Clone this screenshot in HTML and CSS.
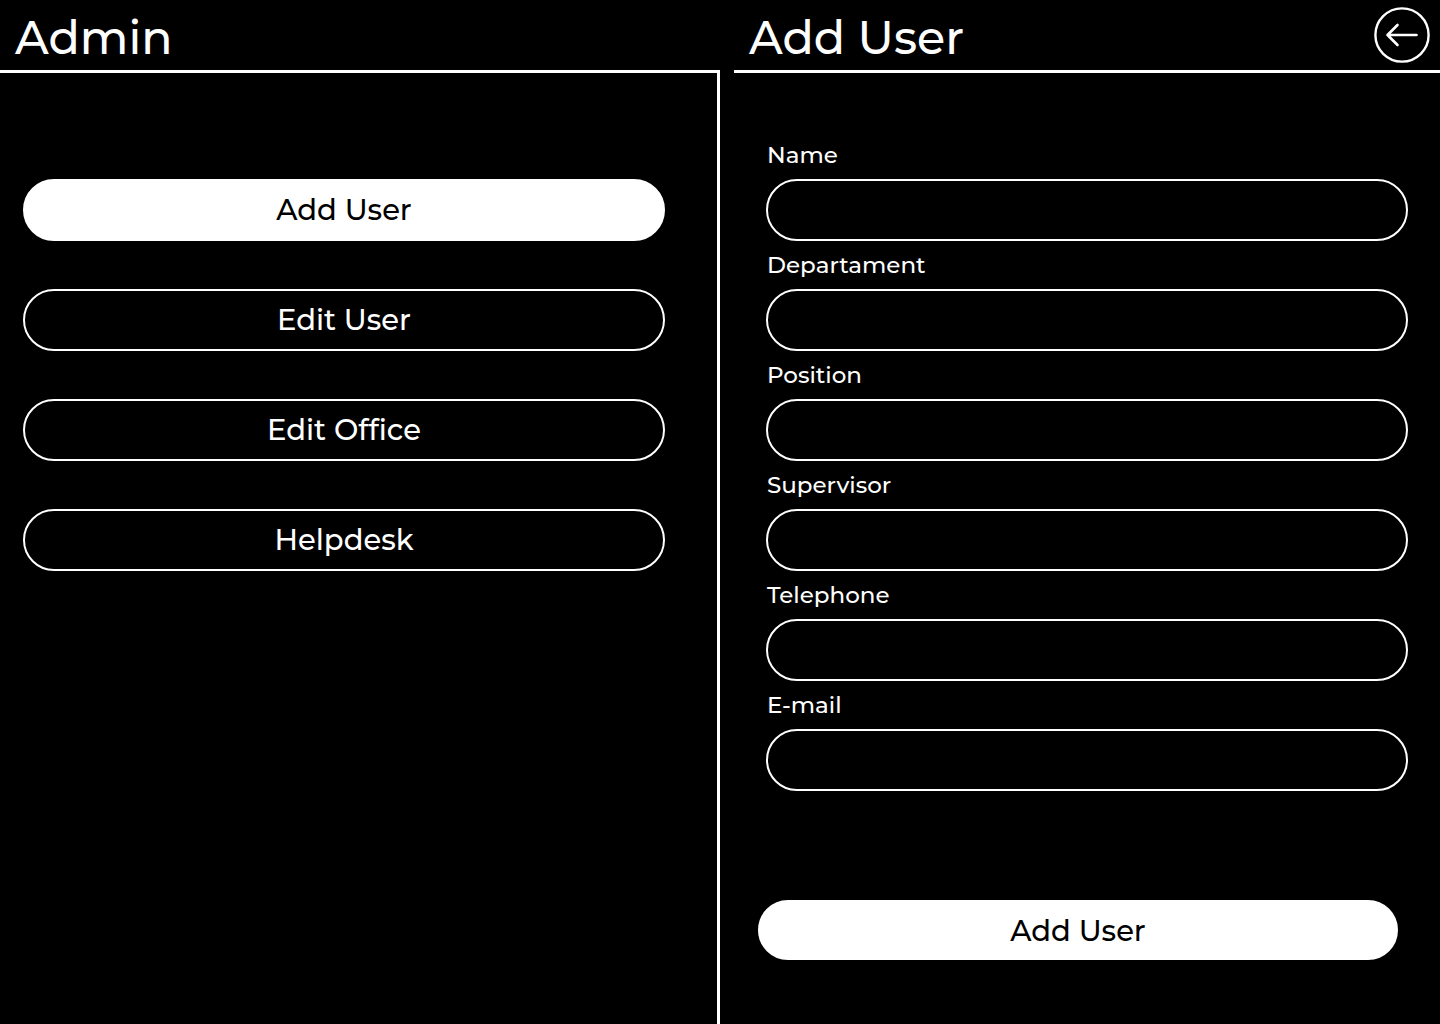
FILE: index.html
```html
<!DOCTYPE html>
<html lang="en">
<head>
<meta charset="utf-8">
<meta name="viewport" content="width=device-width, initial-scale=1">
<title>Admin – Add User</title>
<link rel="stylesheet" href="styles.css">
</head>
<body>
<div class="layout">
  <section class="panel">
    <header class="panel-header">
      <h1 class="title">Admin</h1>
    </header>
    <nav class="menu">
      <button type="button" class="pill pill-active">Add User</button>
      <button type="button" class="pill">Edit User</button>
      <button type="button" class="pill">Edit Office</button>
      <button type="button" class="pill">Helpdesk</button>
    </nav>
  </section>
  <main class="panel panel-detail">
    <header class="panel-header">
      <h2 class="title">Add User</h2>
      <button type="button" class="back" aria-label="Back">
        <svg class="back-icon" viewBox="0 0 56 56" fill="none" stroke="currentColor" stroke-linecap="round" stroke-linejoin="round">
          <circle cx="28" cy="28" r="26.600" stroke-width="2.400"/>
          <path d="M42.500 28H13.500M23.500 18L13.500 28L23.500 38" stroke-width="2.600"/>
        </svg>
      </button>
    </header>
    <form>
      <div class="fields">
        <label class="label" for="name">Name</label>
        <input class="input" id="name" type="text">
        <label class="label" for="department">Departament</label>
        <input class="input" id="department" type="text">
        <label class="label" for="position">Position</label>
        <input class="input" id="position" type="text">
        <label class="label" for="supervisor">Supervisor</label>
        <input class="input" id="supervisor" type="text">
        <label class="label" for="telephone">Telephone</label>
        <input class="input" id="telephone" type="tel">
        <label class="label" for="email">E-mail</label>
        <input class="input" id="email" type="email">
      </div>
      <div class="actions">
        <button type="submit" class="pill pill-active pill-submit">Add User</button>
      </div>
    </form>
  </main>
</div>
</body>
</html>
```
FILE: styles.css
```css
* {
  box-sizing: border-box;
}

body {
  margin: 0;
  background: #000;
  color: #fff;
  font-family: Montserrat, Inter, sans-serif;
  font-weight: 500;
}

.layout {
  display: grid;
  grid-template-columns: 1fr 1fr;
  min-height: 100vh;
}

.panel {
  display: flex;
  flex-direction: column;
}

.panel-detail {
  padding-left: 14px;
}

.panel-header {
  display: flex;
  align-items: center;
  justify-content: space-between;
  height: 73px;
  padding: 0 10px 0 15px;
  border-bottom: 3px solid #fff;
}

.title {
  margin: 0;
  padding-top: 6px;
  font-size: 46px;
  font-weight: 500;
  line-height: 64px;
}

.back {
  width: 56px;
  height: 56px;
  padding: 0;
  border: 0;
  border-radius: 50%;
  background: none;
  color: inherit;
  cursor: pointer;
}

.back-icon {
  display: block;
  width: 100%;
  height: 100%;
}

.menu {
  display: flex;
  flex: 1;
  flex-direction: column;
  gap: 48px;
  padding: 106px 52px 48px 23px;
  border-right: 3px solid #fff;
}

.pill {
  width: 100%;
  height: 62px;
  padding: 0 0 2px;
  border: 2px solid #fff;
  border-radius: 31px;
  background: #000;
  color: #fff;
  font: inherit;
  font-size: 29px;
  cursor: pointer;
}

.pill-active {
  background: #fff;
  color: #000;
}

.pill-submit {
  height: 60px;
  padding: 0;
}

.fields {
  padding: 58px 32px 0;
}

.label {
  display: block;
  padding-left: 1px;
  font-size: 23px;
  line-height: 48px;
}

.input {
  display: block;
  width: 100%;
  height: 62px;
  padding: 0 30px;
  border: 2px solid #fff;
  border-radius: 31px;
  background: #000;
  color: #fff;
  font: inherit;
  font-size: 23px;
}

.actions {
  padding: 109px 42px 64px 24px;
}
```
